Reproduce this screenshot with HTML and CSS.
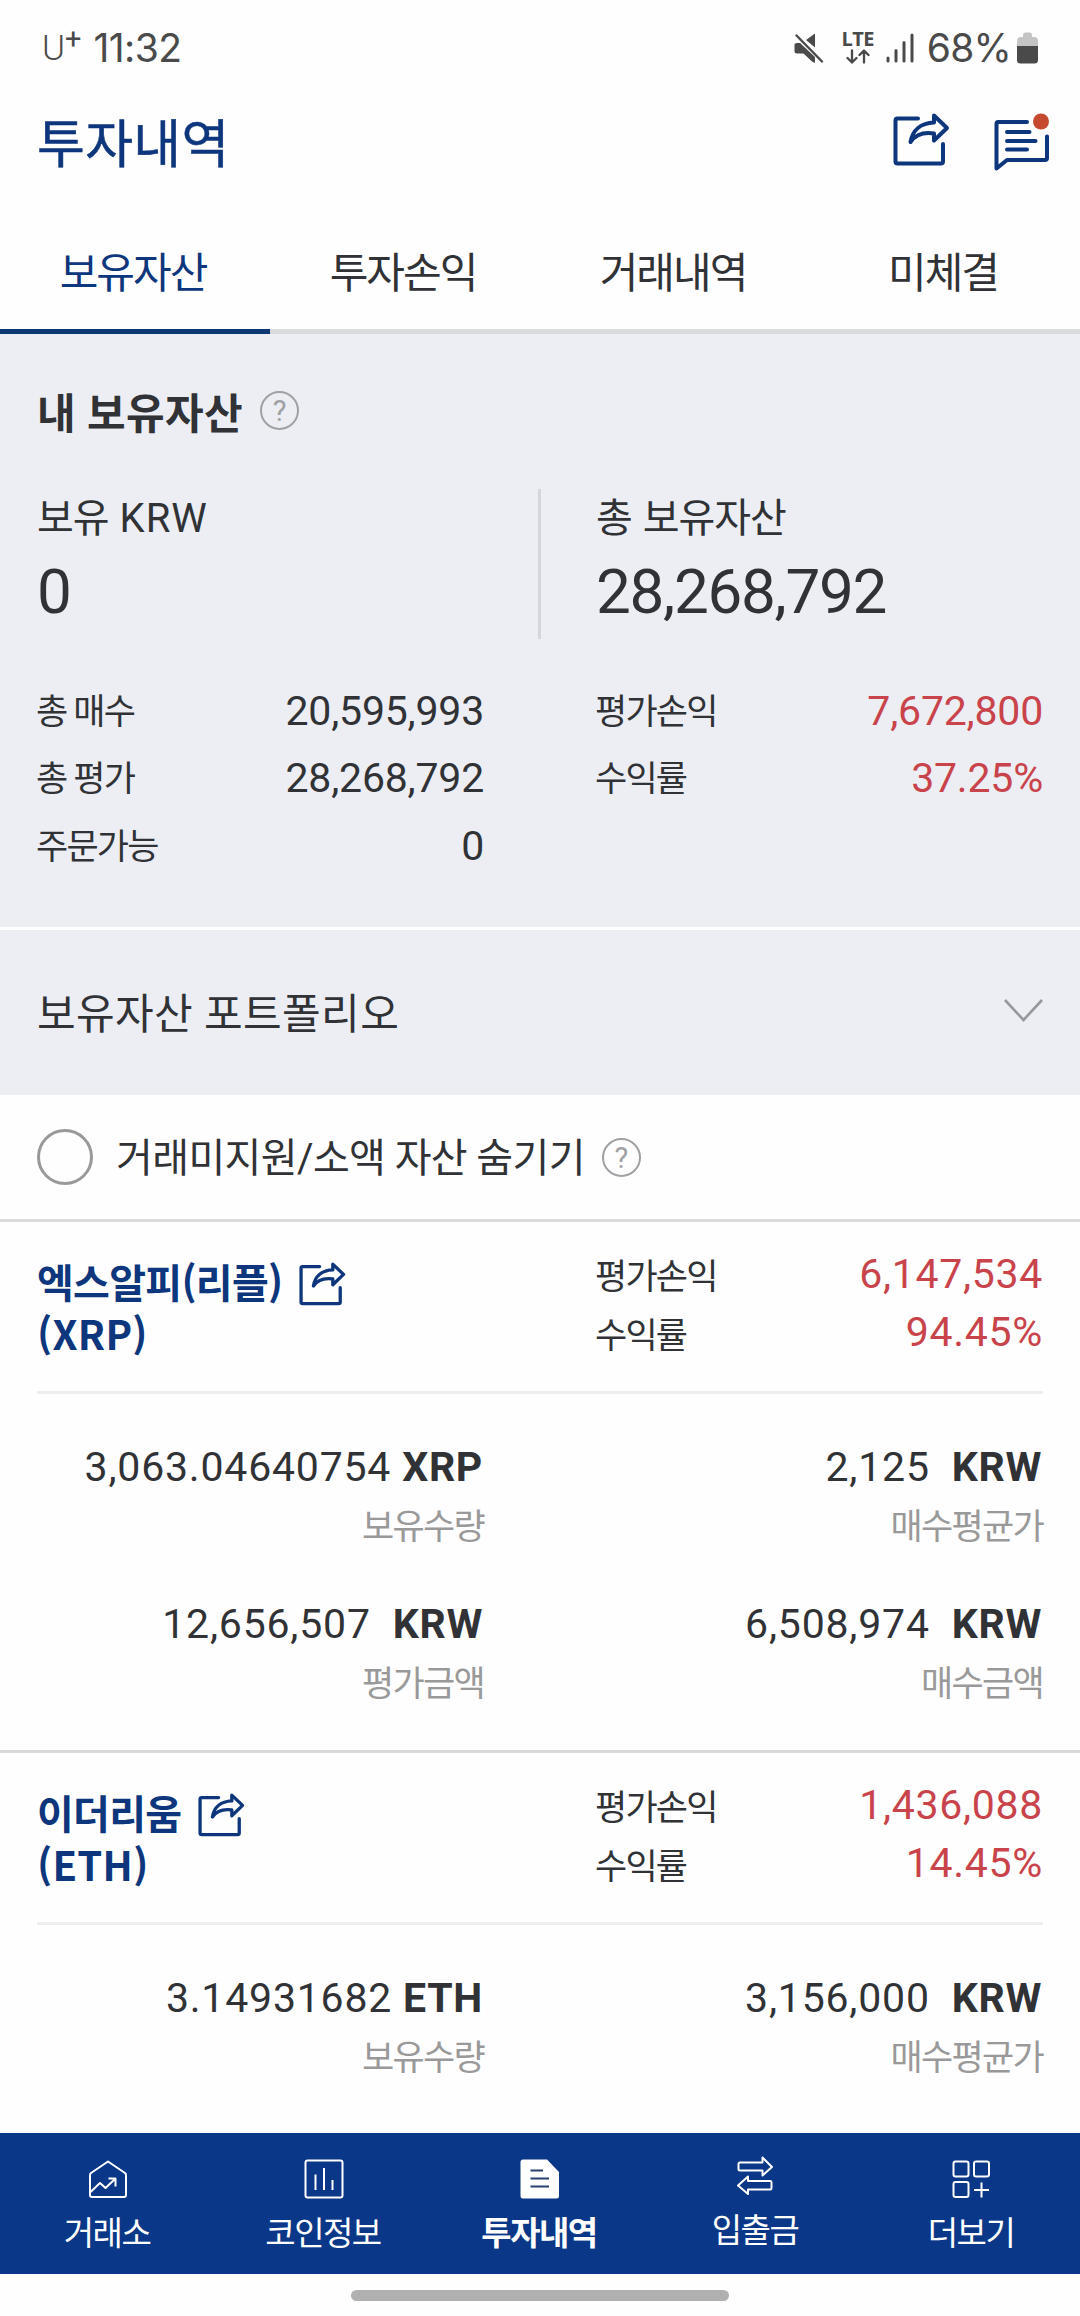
FILE: index.html
```html
<!DOCTYPE html>
<html lang="ko">
<head>
  <meta charset="UTF-8" />
  <meta name="viewport" content="width=device-width, initial-scale=1.0" />
  <title>투자내역</title>
  <link rel="stylesheet" href="styles.css">
</head>
<body>
  <svg class="defs" aria-hidden="true">
    <symbol id="icon-share" viewBox="0 0 57 54">
      <path d="M25 6.5H4.5a2 2 0 0 0-2 2V49.5a2 2 0 0 0 2 2H48a2 2 0 0 0 2-2V32" />
      <path d="M41 3.5L54 16L41 28.5V21.5C31 20 23 22 17.500 30C19.500 18 28 11 41 10.500Z" />
    </symbol>
  </svg>

  <div class="status-bar">
    <div class="status-left">
      <span class="carrier">U<sup>+</sup></span>
      <span class="clock">11:32</span>
    </div>
    <div class="status-right">
      <svg class="mute" width="30" height="30" viewBox="0 0 30 30">
        <path fill="#4a4a4a" d="M0.5 11.5Q0.5 10 3 10H6L21 24V29.5Q20 30 18 28.5L9.500 20.500H3Q0.500 20.500 0.500 18.500ZM12 7L21 0.500V14.500Z" />
        <path stroke="#4a4a4a" stroke-width="2.400" stroke-linecap="round" d="M2.500 2.500L28 28.500" />
      </svg>
      <div class="lte">
        <span>LTE</span>
        <svg width="26" height="15" viewBox="0 0 26 15" fill="none" stroke="#4a4a4a" stroke-width="2.300" stroke-linecap="round" stroke-linejoin="round">
          <path d="M7 1.500V13M2.500 9L7 13.500L11.500 9M19 13.500V2M14.500 6L19 1.500L23.500 6" />
        </svg>
      </div>
      <svg class="signal" width="28" height="30" viewBox="0 0 28 30" stroke="#4a4a4a" stroke-width="3" stroke-linecap="round">
        <path d="M2 25V28M10 17.500V28M18 9.500V28M26 2V28" />
      </svg>
      <span class="percent">68%</span>
      <svg class="battery" width="21" height="32" viewBox="0 0 21 32">
        <path fill="#c4c4c4" d="M6 3Q6 0.500 8 0.500H13Q15 0.500 15 3V5H17Q21 5 21 9V15H0V9Q0 5 4 5H6Z" />
        <path fill="#4a4a4a" d="M0 14H21V28Q21 31.500 17.500 31.500H3.500Q0 31.500 0 28Z" />
      </svg>
    </div>
  </div>

  <header class="header">
    <h1>투자내역</h1>
    <div class="header-icons">
      <svg class="share-icon share-large"><use href="#icon-share" /></svg>
      <svg class="message-icon" width="60" height="60" viewBox="0 0 60 60" fill="none" stroke="#0d367c" stroke-width="4" stroke-linecap="round" stroke-linejoin="round">
        <path d="M35 10H6Q4.500 10 4.500 12V56.500L15 48H53Q55 48 55 46V24.500" />
        <path d="M15 20H37.500M15 29H43.500M15 37.500H35" />
        <circle cx="49" cy="9.500" r="8" fill="#c4492f" stroke="none" />
      </svg>
    </div>
  </header>

  <nav class="tabs">
    <a class="tab active">보유자산</a>
    <a class="tab">투자손익</a>
    <a class="tab">거래내역</a>
    <a class="tab">미체결</a>
  </nav>

  <section class="summary">
    <h2>내 보유자산 <span class="help">?</span></h2>
    <div class="balance">
      <div class="balance-item">
        <div class="balance-label">보유 <span class="unit">KRW</span></div>
        <div class="balance-value">0</div>
      </div>
      <div class="balance-item">
        <div class="balance-label">총 보유자산</div>
        <div class="balance-value">28,268,792</div>
      </div>
    </div>
    <div class="detail">
      <div class="detail-col">
        <div class="row"><span class="label">총 매수</span><span class="num">20,595,993</span></div>
        <div class="row"><span class="label">총 평가</span><span class="num">28,268,792</span></div>
        <div class="row"><span class="label">주문가능</span><span class="num">0</span></div>
      </div>
      <div class="detail-col">
        <div class="row"><span class="label">평가손익</span><span class="num up">7,672,800</span></div>
        <div class="row"><span class="label">수익률</span><span class="num up">37.25%</span></div>
      </div>
    </div>
  </section>

  <section class="portfolio">
    <span>보유자산 포트폴리오</span>
    <svg width="41" height="24" viewBox="0 0 41 24" fill="none" stroke="#96989c" stroke-width="2.600">
      <path d="M2 1L20.500 21L39 1" />
    </svg>
  </section>

  <div class="filter">
    <span class="radio"></span>
    <span class="filter-text">거래미지원/소액 자산 숨기기</span>
    <span class="help">?</span>
  </div>

  <main class="coins">
    <article class="coin">
      <div class="coin-head">
        <div class="coin-name">
          <div class="coin-title">엑스알피(리플) <svg class="share-icon"><use href="#icon-share" /></svg></div>
          <div class="ticker">(XRP)</div>
        </div>
        <div class="coin-profit">
          <div class="row"><span class="label">평가손익</span><span class="num up">6,147,534</span></div>
          <div class="row"><span class="label">수익률</span><span class="num up">94.45%</span></div>
        </div>
      </div>
      <div class="coin-body">
        <div class="cell">
          <div class="amount">3,063.04640754 <b>XRP</b></div>
          <div class="caption">보유수량</div>
        </div>
        <div class="cell">
          <div class="amount">2,125&nbsp; <b>KRW</b></div>
          <div class="caption">매수평균가</div>
        </div>
        <div class="cell">
          <div class="amount">12,656,507&nbsp; <b>KRW</b></div>
          <div class="caption">평가금액</div>
        </div>
        <div class="cell">
          <div class="amount">6,508,974&nbsp; <b>KRW</b></div>
          <div class="caption">매수금액</div>
        </div>
      </div>
    </article>

    <article class="coin">
      <div class="coin-head">
        <div class="coin-name">
          <div class="coin-title">이더리움 <svg class="share-icon"><use href="#icon-share" /></svg></div>
          <div class="ticker">(ETH)</div>
        </div>
        <div class="coin-profit">
          <div class="row"><span class="label">평가손익</span><span class="num up">1,436,088</span></div>
          <div class="row"><span class="label">수익률</span><span class="num up">14.45%</span></div>
        </div>
      </div>
      <div class="coin-body">
        <div class="cell">
          <div class="amount">3.14931682 <b>ETH</b></div>
          <div class="caption">보유수량</div>
        </div>
        <div class="cell">
          <div class="amount">3,156,000&nbsp; <b>KRW</b></div>
          <div class="caption">매수평균가</div>
        </div>
      </div>
    </article>
  </main>

  <nav class="bottom-nav">
    <a class="nav-item">
      <svg viewBox="0 0 40 40"><path d="M20 2.500L37 14Q38 15 38 16V36Q38 38 36 38H4Q2 38 2 36V16Q2 15 3 14ZM2.500 33L12 24L17.500 29L27 20M20.500 19.500H27.500V27.500" /></svg>
      <span>거래소</span>
    </a>
    <a class="nav-item">
      <svg viewBox="0 0 40 40"><rect x="1.500" y="1.500" width="37" height="37" rx="2" /><path d="M11.500 15.500V31M20 9V31M28.500 21V31" /></svg>
      <span>코인정보</span>
    </a>
    <a class="nav-item active">
      <svg viewBox="0 0 40 40"><path fill="#fff" stroke="none" d="M3 0.500H27L39 13V37Q39 39.500 36.500 39.500H3Q0.500 39.500 0.500 37V3Q0.500 0.500 3 0.500Z" /><path stroke="#26416f" d="M10.500 11.500H23M10.500 19.500H29M10.500 27.500H29" /></svg>
      <span>투자내역</span>
    </a>
    <a class="nav-item raised">
      <svg viewBox="0 0 40 40"><path d="M4 6.500H26.500V1.500L36 11L26.500 19.500V14.500H4Q2.500 14.500 2.500 13V8Q2.500 6.500 4 6.500ZM34.500 25H12V20.500L2 29.500L12 38V33.500H34.500Q35.500 33.500 35.500 32V26.500Q35.500 25 34.500 25Z" /></svg>
      <span>입출금</span>
    </a>
    <a class="nav-item">
      <svg viewBox="0 0 40 40"><rect x="1.500" y="2.500" width="15" height="15" rx="2" /><rect x="22" y="2.500" width="15" height="15" rx="2" /><rect x="1.500" y="23" width="15" height="15" rx="2" /><path d="M29.500 23.500V38.500M22 31H37" /></svg>
      <span>더보기</span>
    </a>
  </nav>
  <div class="home-indicator"></div>
</body>
</html>
```

FILE: styles.css
```css
* {
  box-sizing: border-box;
}
body {
  margin: 0;
  width: 1080px;
  height: 2316px;
  overflow: hidden;
  background: #fefefe;
  color: #303236;
  font-family: Roboto, "Noto Sans CJK KR", sans-serif;
  display: flex;
  flex-direction: column;
}
.defs {
  display: none;
}

/* status bar */
.status-bar {
  height: 95px;
  padding: 0 42px 0 42px;
  display: flex;
  justify-content: space-between;
  align-items: center;
  color: #4a4a4a;
  font-family: Inter, Roboto, sans-serif;
  font-size: 39px;
  font-weight: 400;
}
.status-left, .status-right {
  display: flex;
  align-items: center;
}
.carrier {
  font-family: Roboto, sans-serif;
  font-size: 35px;
  font-weight: 300;
  line-height: 40px;
  padding-top: 3px;
}
.carrier sup {
  font-size: 29px;
  font-weight: 400;
  line-height: 0;
  vertical-align: 11px;
}
.clock {
  margin-left: 12px;
  letter-spacing: -0.6px;
}
.lte {
  width: 34px;
  margin-left: 17px;
  display: flex;
  flex-direction: column;
  align-items: center;
  gap: 3px;
}
.lte span {
  font-family: "Open Sans", sans-serif;
  font-size: 20px;
  font-weight: 700;
  line-height: 15px;
  letter-spacing: -0.5px;
}
.signal {
  margin-left: 11px;
}
.percent {
  margin-left: 13px;
  letter-spacing: -0.8px;
}
.battery {
  margin-left: 6px;
}

/* header */
.header {
  height: 100px;
  padding: 0 28px 0 37px;
  display: flex;
  justify-content: space-between;
  align-items: flex-start;
}
.header h1 {
  margin: 14px 0 0;
  font-size: 52px;
  font-weight: 400;
  line-height: 74px;
  letter-spacing: 0.3px;
  color: #0d367c;
  -webkit-text-stroke: 0.5px #0d367c;
}
.header-icons {
  display: flex;
  gap: 42px;
  padding-top: 17px;
}
.share-icon {
  width: 47px;
  height: 45px;
  fill: none;
  stroke: #0d367c;
  stroke-width: 4;
  stroke-linecap: round;
  stroke-linejoin: round;
}
.share-large {
  width: 57px;
  height: 54px;
}

/* tabs */
.tabs {
  display: flex;
  height: 139px;
}
.tab {
  flex: 1;
  padding: 49px 4px 0 0;
  border-bottom: 5px solid #d9dadc;
  text-align: center;
  font-size: 42px;
  line-height: 60px;
  letter-spacing: -2px;
}
.tab.active {
  color: #0d367c;
  border-color: #0d3773;
}

/* summary */
.summary {
  height: 593px;
  padding: 46px 37px 0;
  background: #eceef4;
}
.summary h2 {
  margin: 0;
  display: flex;
  align-items: center;
  gap: 17px;
  height: 60px;
  font-size: 42px;
  font-weight: 700;
  letter-spacing: 0.4px;
}
.help {
  width: 39px;
  height: 39px;
  border: 2px solid #a0a1a4;
  border-radius: 50%;
  color: #a0a1a4;
  font-size: 29px;
  font-weight: 400;
  line-height: 36px;
  letter-spacing: 0;
  text-align: center;
}
.balance {
  display: flex;
  height: 150px;
  margin-top: 49px;
}
.balance-item:first-child {
  width: 504px;
  border-right: 3px solid #d5d7dc;
}
.balance-item + .balance-item {
  padding-left: 55px;
}
.balance-label {
  padding-top: 2px;
  font-size: 40px;
  line-height: 56px;
  letter-spacing: -1px;
  word-spacing: 2px;
}
.balance-label .unit {
  letter-spacing: 1px;
}
.balance-value {
  font-size: 62px;
  line-height: 90px;
  letter-spacing: -1.3px;
}
.detail {
  display: grid;
  grid-template-columns: 447px 447px;
  gap: 112px;
  margin-top: 38px;
}
.row {
  display: flex;
  justify-content: space-between;
  align-items: center;
  height: 67.5px;
}
.label {
  margin-left: -1px;
  padding-bottom: 5px;
  font-size: 35px;
  letter-spacing: -1.8px;
}
.num {
  font-size: 41px;
  letter-spacing: -0.2px;
}
.up {
  color: #c9434b;
}

/* portfolio */
.portfolio {
  height: 168px;
  padding: 0 36px 3px 37px;
  border-top: 3px solid #fff;
  background: #eceef4;
  display: flex;
  justify-content: space-between;
  align-items: center;
  font-size: 42px;
  letter-spacing: 0.4px;
}
.portfolio span {
  padding-bottom: 2px;
}

/* filter */
.filter {
  height: 127px;
  padding: 0 37px;
  border-bottom: 3px solid #d9dadc;
  display: flex;
  align-items: center;
}
.radio {
  width: 56px;
  height: 56px;
  border: 3px solid #999;
  border-radius: 50%;
}
.filter-text {
  margin: 0 17px 0 23px;
  padding-bottom: 4px;
  font-size: 40px;
  letter-spacing: -0.6px;
}

/* coin list */
.coins {
  height: 911px;
  overflow: hidden;
}
.coin {
  height: 531px;
  padding: 0 37px;
  border-bottom: 3px solid #d9dadc;
}
.coin-head {
  display: grid;
  grid-template-columns: 447px 447px;
  gap: 112px;
  height: 172px;
  border-bottom: 3px solid #eee;
}
.coin-name {
  padding-top: 33px;
  font-family: "Noto Sans CJK KR", sans-serif;
  font-size: 40px;
  font-weight: 700;
  line-height: 52px;
  letter-spacing: -0.7px;
  color: #0d367c;
}
.coin-title {
  display: flex;
  align-items: center;
  gap: 17px;
}
.coin-title .share-icon {
  margin-top: 5px;
}
.ticker {
  letter-spacing: 0.3px;
}
.coin-profit {
  padding-top: 22px;
}
.coin-profit .row {
  height: 59px;
}
.coin-profit .row + .row .num {
  padding-bottom: 1px;
}
.coin-profit .label {
  padding-bottom: 1px;
}
.coin-profit .num {
  letter-spacing: 0.7px;
}
.coin-body {
  display: grid;
  grid-template-columns: 447px 447px;
  column-gap: 112px;
  padding-top: 43px;
}
.cell {
  height: 157px;
  text-align: right;
}
.amount {
  padding-right: 1px;
  font-size: 41px;
  line-height: 60px;
  letter-spacing: 0.8px;
}
.amount b {
  letter-spacing: 0.7px;
}
.caption {
  font-size: 35px;
  line-height: 62px;
  letter-spacing: -1.7px;
  color: #999;
}

/* bottom nav */
.bottom-nav {
  display: flex;
  height: 141px;
  background: #0a3787;
}
.nav-item {
  flex: 1;
  padding-top: 26px;
  display: flex;
  flex-direction: column;
  align-items: center;
  color: #fff;
  font-size: 33px;
  line-height: 48px;
  letter-spacing: -1.5px;
}
.nav-item span {
  padding-right: 2px;
}
.nav-item svg {
  width: 40px;
  height: 40px;
  margin-bottom: 11px;
  fill: none;
  stroke: #fff;
  stroke-width: 2;
  stroke-linejoin: round;
}
.nav-item.active {
  font-weight: 700;
}
.nav-item.raised {
  padding-top: 23px;
}
.home-indicator {
  width: 378px;
  height: 11px;
  margin: 16px auto 0;
  border-radius: 6px;
  background: #b0b0b0;
}
```
